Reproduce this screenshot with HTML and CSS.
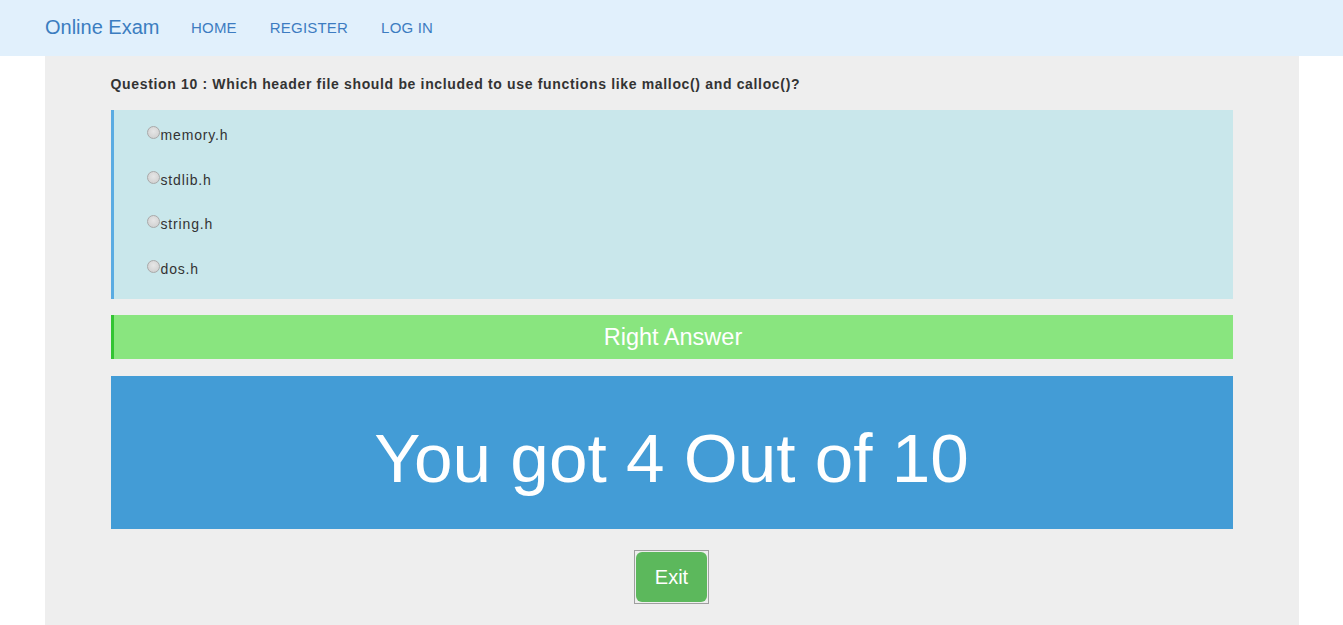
FILE: index.html
```html
<!DOCTYPE html>
<html>
<head>
<meta charset="utf-8">
<title>Online Exam</title>
<link rel="stylesheet" href="styles.css">
</head>
<body>
<nav class="navbar">
  <a class="brand" href="#">Online Exam</a>
  <ul class="nav-links">
    <li><a href="#">HOME</a></li>
    <li><a href="#">REGISTER</a></li>
    <li><a href="#">LOG IN</a></li>
  </ul>
</nav>
<main class="container">
  <div class="content">
    <p class="question">Question 10 : Which header file should be included to use functions like malloc() and calloc()?</p>
    <div class="options">
      <label class="option"><input type="radio" name="q10" class="radio">memory.h</label>
      <label class="option"><input type="radio" name="q10" class="radio">stdlib.h</label>
      <label class="option"><input type="radio" name="q10" class="radio">string.h</label>
      <label class="option"><input type="radio" name="q10" class="radio">dos.h</label>
    </div>
    <div class="right-answer">Right Answer</div>
    <div class="score">You got 4 Out of 10</div>
    <div class="exit-row">
      <span class="exit-frame"><button class="exit-btn">Exit</button></span>
    </div>
  </div>
</main>
</body>
</html>
```
FILE: styles.css
```css
* { box-sizing: border-box; }
html, body {
  margin: 0;
  padding: 0;
  background: #ffffff;
  font-family: "Liberation Sans", Arial, Helvetica, sans-serif;
  color: #333333;
}
.navbar {
  height: 56px;
  background: #e1f0fc;
  display: flex;
  align-items: center;
  padding-left: 45px;
  padding-bottom: 1px;
}
.brand {
  font-size: 20px;
  color: #3b7dc0;
  text-decoration: none;
  margin-right: 15px;
}
.nav-links {
  display: flex;
  list-style: none;
  margin: 0;
  padding: 0;
}
.nav-links a {
  display: block;
  padding: 0 16.5px;
  font-size: 15px;
  letter-spacing: 0.2px;
  color: #3d7cc1;
  text-decoration: none;
}
.container {
  width: 1254px;
  margin: 0 auto;
  background: #eeeeee;
  min-height: 569px;
}
.content {
  padding: 18px 66px 20px;
}
.question {
  margin: 0;
  font-size: 14px;
  line-height: 20px;
  font-weight: bold;
  letter-spacing: 0.66px;
  color: #333333;
}
.options {
  margin-top: 16px;
  background: #c9e7eb;
  border-left: 3px solid #5aace2;
  padding: 15px 0 20px 28px;
  display: flex;
  flex-direction: column;
  gap: 24.5px;
}
.option {
  display: flex;
  align-items: flex-start;
  font-size: 14px;
  line-height: 20px;
  letter-spacing: 0.85px;
  color: #333333;
}
.radio {
  -webkit-appearance: none;
  appearance: none;
  width: 13px;
  height: 13px;
  margin: 1px 1px 0 5px;
  border-radius: 50%;
  border: 1px solid #a9a9a9;
  background: radial-gradient(circle at 50% 40%, #e6e6e6 0%, #d4d4d4 70%, #c8c8c8 100%);
  flex: none;
}
.right-answer {
  margin-top: 16px;
  height: 44px;
  background: #89e57f;
  border-left: 3px solid #33c433;
  color: #ffffff;
  font-size: 23.5px;
  line-height: 44px;
  text-align: center;
}
.score {
  margin-top: 17px;
  height: 153px;
  background: #439cd6;
  color: #ffffff;
  font-size: 69.3px;
  display: flex;
  align-items: center;
  justify-content: center;
  padding-top: 12px;
}
.exit-row {
  margin-top: 21px;
  display: flex;
  justify-content: center;
}
.exit-frame {
  display: inline-block;
  border: 1px solid #9f9f9f;
  padding: 1px;
  line-height: 0;
}
.exit-btn {
  font-family: "Liberation Sans", Arial, Helvetica, sans-serif;
  font-size: 20px;
  line-height: 22px;
  color: #ffffff;
  background: #5cb85c;
  border: none;
  border-radius: 6px;
  width: 71px;
  height: 50px;
  padding: 0;
}
```
